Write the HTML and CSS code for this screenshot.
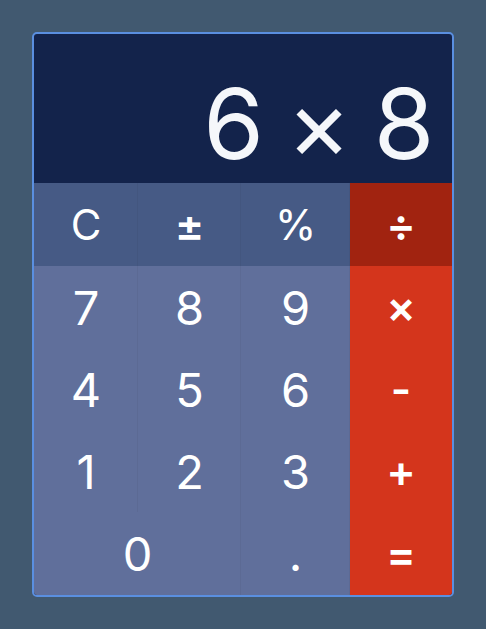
FILE: index.html
```html
<!DOCTYPE html>
<html>
<head>
<meta charset="utf-8">
<link rel="stylesheet" href="styles.css">
</head>
<body>
<div class="calc">
  <div class="display">6 × 8</div>
  <div class="keys">
    <div class="key fn">C</div>
    <div class="key fn sym">±</div>
    <div class="key fn">%</div>
    <div class="key op op-active">÷</div>
    <div class="key">7</div>
    <div class="key">8</div>
    <div class="key">9</div>
    <div class="key op">×</div>
    <div class="key">4</div>
    <div class="key">5</div>
    <div class="key">6</div>
    <div class="key op">-</div>
    <div class="key">1</div>
    <div class="key">2</div>
    <div class="key">3</div>
    <div class="key op">+</div>
    <div class="key zero">0</div>
    <div class="key">.</div>
    <div class="key op">=</div>
  </div>
</div>
</body>
</html>
```
FILE: styles.css
```css
html, body {
  margin: 0;
  padding: 0;
}
body {
  background: #415970;
  font-family: Inter, "Noto Sans", sans-serif;
  width: 486px;
  height: 629px;
  overflow: hidden;
}
.calc {
  margin: 32px 0 0 32px;
  width: 418px;
  border: 2px solid #5a8fe0;
  border-radius: 5px;
  overflow: hidden;
  background: #13234b;
}
.display {
  height: 149px;
  box-sizing: border-box;
  color: #f5f7fa;
  font-size: 98px;
  letter-spacing: -2.5px;
  line-height: 1;
  text-align: right;
  padding: 41px 20px 0 0;
  white-space: nowrap;
}
.keys {
  display: grid;
  grid-template-columns: 104px 103px 109px 102px;
  grid-template-rows: 83px 82px 82px 82px 83px;
}
.key {
  display: flex;
  align-items: center;
  justify-content: center;
  background: #606f9b;
  color: #ffffff;
  font-size: 47px;
  box-shadow: inset -1px 0 0 rgba(0, 0, 0, 0.04);
}
.fn {
  background: #465a85;
  font-size: 42px;
}
.sym {
  font-size: 44px;
  font-weight: 600;
}
.op {
  background: #d4351c;
  font-size: 44px;
  font-weight: 600;
  box-shadow: none;
}
.op-active {
  background: #a12310;
}
.zero {
  grid-column: span 2;
}
```
